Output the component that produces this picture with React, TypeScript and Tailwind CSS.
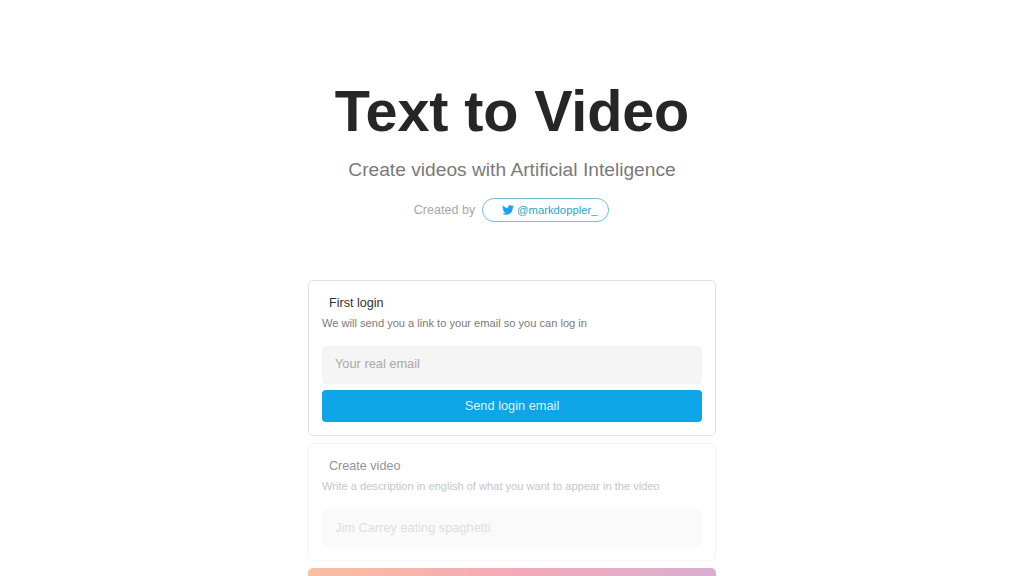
import { FaTwitter } from 'react-icons/fa';

export default function App() {
  return (
    <div className="flex h-screen flex-col items-center overflow-hidden bg-white font-['Liberation_Sans',Arial,sans-serif]">
      <h1 className="mt-[76px] text-[57.6px] leading-[70px] font-bold tracking-[-0.15px] text-[#262626]">Text to Video</h1>
      <p className="mt-[12px] text-[19.2px] leading-[24px] text-[#7a7a7a]">Create videos with Artificial Inteligence</p>
      <div className="mt-[16px] flex items-center gap-[7px] pr-[1px]">
        <span className="text-[12.6px] text-[#a8a8a8]">Created by</span>
        <a className="flex h-[24px] w-[127px] items-center justify-center gap-[3px] rounded-full border border-[#6cbfd9] pl-[8px] text-[11.3px] text-[#2aa5c8]">
          <FaTwitter className="h-[12px] w-[12px] text-[#1da1f2]" />
          @markdoppler_
        </a>
      </div>

      <div className="mt-[58px] flex w-[408px] flex-col gap-[7px]">
        <section className="rounded-[5px] border border-[#e2e2e2] px-[13px] pt-[14px] pb-[13px]">
          <h2 className="pl-[7px] text-[12.6px] leading-[17px] text-[#333333]">First login</h2>
          <p className="mt-[3px] text-[11.1px] leading-[16px] text-[#7a7a7a]">We will send you a link to your email so you can log in</p>
          <div className="mt-[15px] flex h-[38px] items-center rounded-[4px] bg-[#f5f5f5] px-[13px] pb-[2px] text-[12.8px] text-[#a8a8a8]">Your real email</div>
          <button className="mt-[6px] h-[32px] w-full rounded-[4px] bg-[#0ea5e9] text-[12.8px] text-[#dff3fc]">Send login email</button>
        </section>
        <section className="rounded-[5px] border border-[#f3f3f3] px-[13px] pt-[14px] pb-[13px]">
          <h2 className="pl-[7px] text-[12.6px] leading-[17px] text-[#949494]">Create video</h2>
          <p className="mt-[3px] text-[11.1px] leading-[16px] text-[#c6c6c6]">Write a description in english of what you want to appear in the video</p>
          <div className="mt-[15px] flex h-[38px] items-center rounded-[4px] bg-[#fafafa] px-[13px] text-[12.8px] text-[#dedede]">Jim Carrey eating spaghetti</div>
        </section>
        <button className="h-[40px] w-full rounded-[5px] bg-gradient-to-r from-[#fbbf9f] via-[#f4a9b8] to-[#d8aed0]" />
      </div>
    </div>
  );
}
